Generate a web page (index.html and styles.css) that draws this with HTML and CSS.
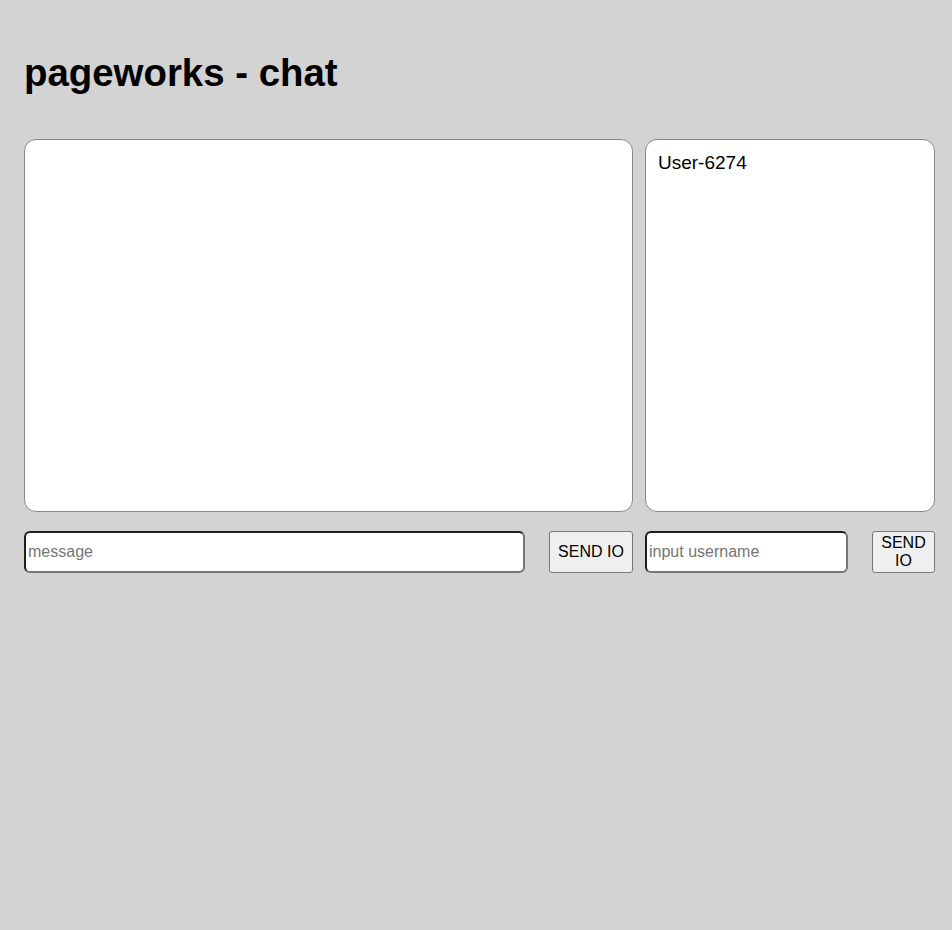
FILE: index.html
```html
<!DOCTYPE html>
<html><head><title>pageworks - chat</title><meta charset="utf-8">
<link rel="stylesheet" href="styles.css"></head>
<body>
<div class="page">
	<h1 class="title">pageworks - chat</h1>

	<div class="chat">
		<div class="col">
			<div id="log" class="box"></div>
			<div class="row">
				<input id="msg" class="inp msg" type="text" placeholder="message">
				<button class="btn btn-msg">SEND IO</button>
			</div>
		</div>
		<div class="col">
			<div id="users" class="box users">
				<div class="user">User-6274</div>
			</div>
			<div class="row">
				<input id="uname" class="inp uname" type="text" placeholder="input username">
				<button class="btn btn-user">SEND IO</button>
			</div>
		</div>
	</div>
</div>
</body></html>
```

FILE: styles.css
```css
html, body { margin: 0; background: #d3d3d3; }
body { font-family: "Liberation Sans", Arial, sans-serif; }
.page { padding: 0 24px; }
.title { font-size: 38.4px; font-weight: bold; margin: 0; padding: 52px 0 45px; line-height: 42px; }

.chat { display: grid; grid-template-columns: 609px 290px; gap: 12px; }
.col { display: flex; flex-direction: column; gap: 19px; }
.box { height: 371px; background: #fff; border: 1px solid #888; border-radius: 12px; }
.users { padding: 11px 12px 10px; box-sizing: border-box; height: 373px; }
.user { font-size: 19px; line-height: 24px; }

.row { display: flex; justify-content: space-between; height: 42px; }
.inp { box-sizing: border-box; height: 42px; margin: 0; padding: 0 2px; font: 16px "Liberation Sans", Arial, sans-serif;
	border: 2px solid; border-color: #1e1e1e #767676 #767676 #1e1e1e; border-radius: 6px; background: #fff; }
.inp::placeholder { color: #757575; }
.msg { width: 501px; }
.uname { width: 203px; }
.btn { box-sizing: border-box; height: 42px; margin: 0; padding: 0 8px; font: 16px/18px "Liberation Sans", Arial, sans-serif;
	color: #000; background: #efefef; border: 1px solid #767676; border-radius: 3px; }
.btn-msg { width: 84px; }
.btn-user { width: 63px; }
```
